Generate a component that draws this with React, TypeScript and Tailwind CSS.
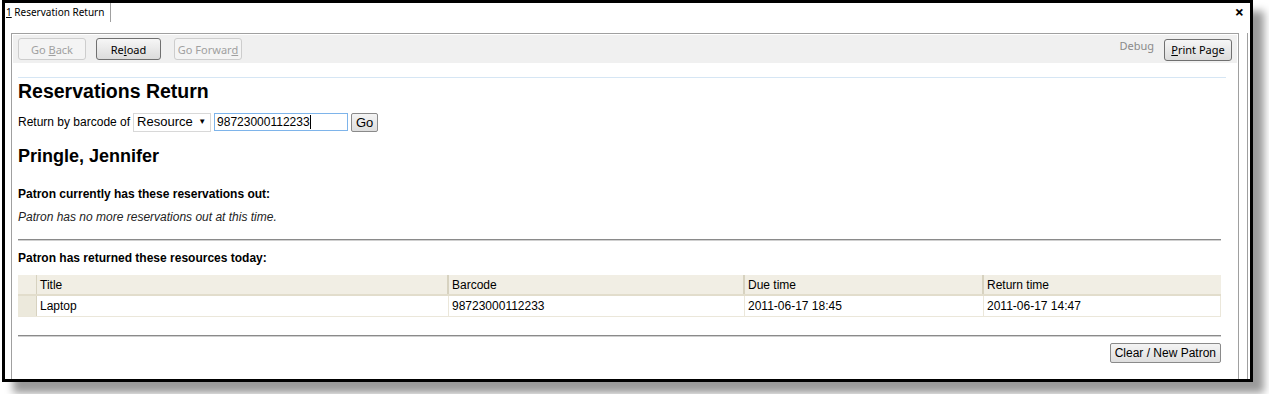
import React from "react";

const chrome = { fontFamily: '"Noto Sans", "Open Sans", sans-serif' };
const body = { fontFamily: '"Liberation Sans", Arial, sans-serif' };

function ToolButton({ children, disabled, className = "" }: { children: React.ReactNode; disabled?: boolean; className?: string }) {
  return (
    <button
      type="button"
      className={`h-[22px] rounded-[3px] border text-[11px] leading-none ${
        disabled
          ? "border-[#cdcdcd] bg-[#f4f4f4] text-[#a0a0a0]"
          : "border-[#707070] bg-gradient-to-b from-[#f6f6f6] to-[#dcdcdc] text-black"
      } ${className}`}
      style={chrome}
    >
      {children}
    </button>
  );
}

export default function App() {
  const rows = [{ title: "Laptop", barcode: "98723000112233", due: "2011-06-17 18:45", returned: "2011-06-17 14:47" }];

  return (
    <div className="w-[1269px] h-[394px] bg-white overflow-hidden">
      <div className="ml-[2px] w-[1251px] h-[382px] border-[3px] border-black bg-white shadow-[11px_11px_8px_rgba(0,0,0,0.4)] flex flex-col">
        {/* tab strip */}
        <div className="h-[19px] flex items-stretch justify-between shrink-0" style={chrome}>
          <div className="px-[1px] pr-[6px] border-r border-[#a0a0a0] text-[10px] leading-[19px] text-black">
            <span className="underline">1</span> Reservation Return
          </div>
          <div className="pr-[6px] text-[16px] font-bold leading-[19px] text-black">×</div>
        </div>

        <div className="flex flex-1 min-h-0">
          <div className="ml-[6px] mt-[11px] w-[1228px] border border-b-0 border-[#a0a0a0] flex flex-col">
            {/* toolbar */}
            <div className="mx-[1px] mt-[1px] h-[28px] bg-[#f0f0f0] flex items-center px-[5px]">
              <ToolButton disabled className="w-[68px]">
                Go <span className="underline">B</span>ack
              </ToolButton>
              <ToolButton className="w-[65px] ml-[10px]">
                Re<span className="underline">l</span>oad
              </ToolButton>
              <ToolButton disabled className="w-[68px] ml-[13px]">
                Go Forwar<span className="underline">d</span>
              </ToolButton>
              <div className="flex-1" />
              <span className="text-[11px] text-[#8a8a8a] mr-[10px] -mt-[6px]" style={chrome}>
                Debug
              </span>
              <ToolButton className="w-[68px] mt-[1px]">
                <span className="underline">P</span>rint Page
              </ToolButton>
            </div>

            <div className="px-[6px] pr-[12px] text-black" style={body}>
              <div className="mt-[14px] border-t border-[#d6e6f4]" />
              <h1 className="mt-[2px] text-[19.5px] font-bold leading-[22px]">Reservations Return</h1>

              <div className="mt-[10px] flex items-center text-[12px] h-[20px]">
                <span>Return by barcode of</span>
                <div className="ml-[3px] w-[78px] h-[19px] border border-[#d8d8d8] flex items-center justify-between px-[3px] text-[13px]">
                  <span>Resource</span>
                  <span className="text-[8px] mr-[1px]">▼</span>
                </div>
                <div className="ml-[3px] w-[134px] h-[18px] border border-[#7eb4ea] flex items-center px-[2px] text-[12px]">
                  98723000112233<span className="w-px h-[14px] bg-black" />
                </div>
                <button
                  type="button"
                  className="ml-[3px] w-[27px] h-[19px] border border-[#8a8a8a] rounded-[2px] bg-gradient-to-b from-[#f4f4f4] to-[#dedede] text-[13px] leading-none"
                >
                  Go
                </button>
              </div>

              <h2 className="mt-[14px] text-[18px] font-bold leading-[20px]">Pringle, Jennifer</h2>

              <div className="mt-[21px] text-[12px] font-bold leading-[14px]">Patron currently has these reservations out:</div>
              <div className="mt-[9px] text-[12px] italic leading-[14px] text-[#222]">
                Patron has no more reservations out at this time.
              </div>

              <div className="mt-[15px] mr-[5px] border-t border-[#8a8a8a]" style={{ boxShadow: "0 1px 0 #d0d0d0" }} />

              <div className="mt-[11px] text-[12px] font-bold leading-[14px]">Patron has returned these resources today:</div>

              <div className="mt-[10px] mr-[5px] text-[12px]">
                <div className="flex h-[21px] bg-[#f1eee4] border-b-2 border-[#e2ddcc]">
                  <div className="w-[19px] border-r border-[#d7d2c0]" />
                  <div className="w-[412px] pl-[3px] leading-[20px] border-r-2 border-[#d7d2c0]">Title</div>
                  <div className="w-[296px] pl-[3px] leading-[20px] border-r-2 border-[#d7d2c0]">Barcode</div>
                  <div className="w-[239px] pl-[3px] leading-[20px] border-r-2 border-[#d7d2c0]">Due time</div>
                  <div className="flex-1 pl-[3px] leading-[20px]">Return time</div>
                </div>
                {rows.map((r) => (
                  <div key={r.barcode} className="flex h-[21px] border-b border-[#ebe7da]">
                    <div className="w-[19px] bg-[#ece9dc] border-r border-[#d7d2c0]" />
                    <div className="w-[412px] pl-[3px] leading-[20px] border-r border-[#ebe7da]">{r.title}</div>
                    <div className="w-[296px] pl-[3px] leading-[20px] border-r border-[#ebe7da]">{r.barcode}</div>
                    <div className="w-[239px] pl-[3px] leading-[20px] border-r border-[#ebe7da]">{r.due}</div>
                    <div className="flex-1 pl-[3px] leading-[20px] border-r border-[#ebe7da]">{r.returned}</div>
                  </div>
                ))}
              </div>

              <div className="mt-[18px] mr-[5px] border-t border-[#8a8a8a]" style={{ boxShadow: "0 1px 0 #d0d0d0" }} />

              <div className="mt-[7px] mr-[5px] flex justify-end">
                <button
                  type="button"
                  className="h-[20px] px-[4px] border border-[#8a8a8a] rounded-[2px] bg-gradient-to-b from-[#f4f4f4] to-[#dedede] text-[12px] leading-none"
                >
                  Clear / New Patron
                </button>
              </div>
            </div>
          </div>
          <div className="ml-[8px] mt-[11px] border-l border-[#a0a0a0]" />
        </div>
      </div>
    </div>
  );
}
